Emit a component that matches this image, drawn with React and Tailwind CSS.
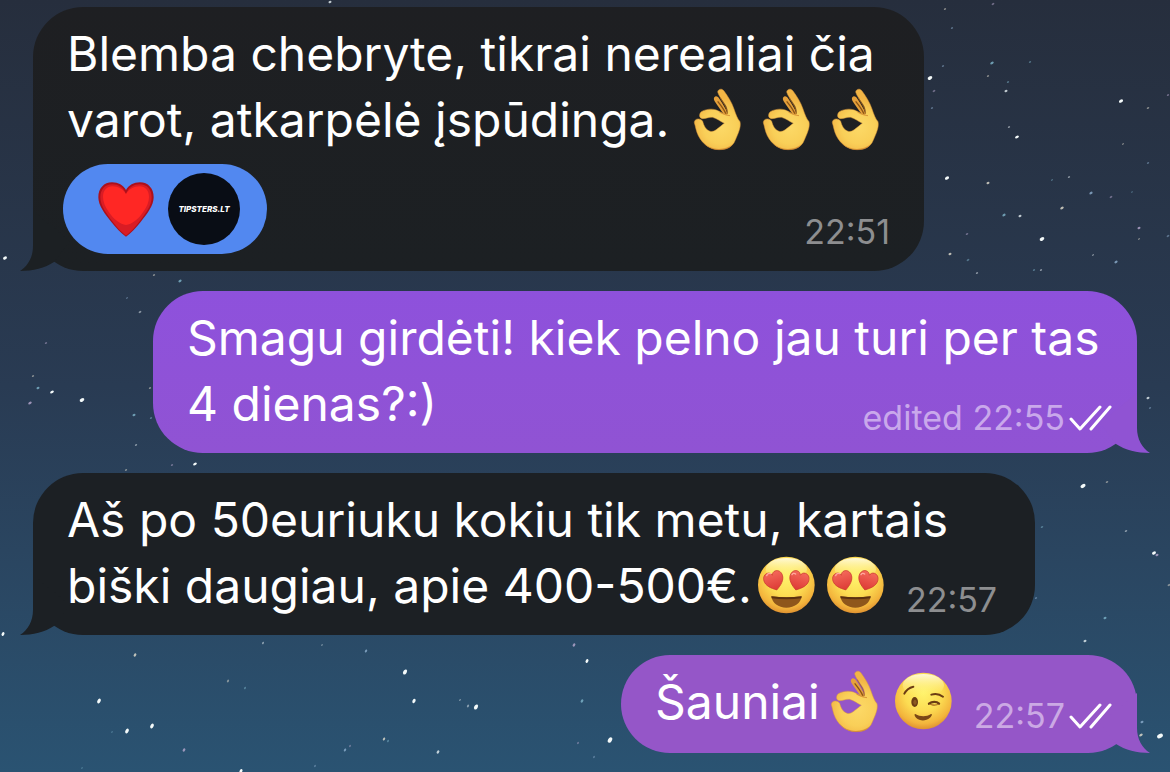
const STARS = [
  [330, 2, 1.3], [952, 28, 1], [993, 4, 1.2], [945, 9, 1], [992, 63, 1.5], [930, 78, 2], [943, 66, 1], [934, 91, 1.2],
  [988, 76, 1], [1008, 82, 1], [1006, 91, 1.3], [932, 108, 1], [1121, 101, 1.8], [1148, 108, 1.1], [1030, 62, 1],
  [1009, 127, 1], [1017, 137, 1.6], [947, 178, 1.8], [988, 183, 1.3], [1052, 180, 0.9], [1069, 177, 1], [1091, 193, 1.4],
  [1111, 197, 1.2], [1062, 208, 1.5], [1004, 215, 1.4], [1020, 216, 1.3], [1042, 239, 2], [967, 234, 1.1], [950, 254, 1.3],
  [968, 260, 1.2], [977, 273, 1], [1116, 262, 1.4], [1139, 228, 1.3], [1139, 239, 0.9], [1034, 270, 1], [1041, 270, 1],
  [1148, 163, 1], [1168, 95, 1], [1123, 144, 0.9], [1132, 192, 0.8], [1093, 255, 0.9], [1168, 236, 1.2],
  [5, 258, 1.7], [154, 275, 1], [180, 281, 1.4], [140, 312, 1.2], [127, 298, 0.9], [46, 343, 1], [33, 376, 1],
  [38, 388, 1.3], [52, 392, 1.6], [82, 400, 2], [30, 403, 1.5], [150, 388, 1], [134, 415, 1.3], [136, 445, 1],
  [195, 464, 1.6], [172, 465, 1], [126, 470, 1], [151, 418, 1],
  [1148, 398, 1.3], [1150, 408, 1], [1083, 486, 2.2], [1107, 482, 1.1], [1042, 527, 1.1], [1126, 531, 1.1],
  [1154, 553, 1.7], [1157, 555, 1.3], [1169, 585, 1.2], [1105, 618, 1.3], [1085, 641, 1.3], [1036, 598, 1],
  [3, 634, 1.6], [135, 655, 1.5], [99, 701, 2], [127, 731, 2], [152, 726, 2], [184, 750, 1.5], [228, 681, 1.2],
  [245, 688, 1.1], [263, 643, 1.1], [366, 651, 1.3], [405, 672, 2.2], [414, 701, 1.8], [476, 707, 2.2], [468, 706, 1.2],
  [345, 750, 1.3], [350, 746, 1], [384, 739, 1.3], [388, 741, 1.1], [438, 752, 1.5], [315, 766, 1], [574, 645, 1.5],
  [587, 661, 1.6], [582, 701, 1.5], [610, 740, 2.4], [594, 757, 1], [578, 743, 1], [241, 771, 1.6], [112, 732, 0.8],
  [460, 700, 0.9], [1142, 722, 1.3], [1160, 736, 2.5], [1141, 735, 1.5], [82, 768, 0.8], [322, 645, 0.8],
];

const COLORS = ["#e9f2f5", "#8fb0cf", "#b9a9cf", "#e5e0cf", "#7fb6cc"];

function NightSky() {
  return (
    <svg
      aria-hidden="true"
      className="absolute inset-0 -z-10 h-full w-full"
      viewBox="0 0 1170 772"
      preserveAspectRatio="xMidYMid slice"
    >
      {STARS.map(([x, y, r], i) => (
        <ellipse
          key={i}
          cx={x}
          cy={y}
          rx={r * 1.25}
          ry={r * 0.8}
          transform={`rotate(${y > 620 && x < 1000 ? -60 : -30} ${x} ${y})`}
          fill={r >= 1.6 ? "#f4fafa" : COLORS[i % 5]}
          opacity={r >= 1.6 ? 1 : r >= 1.3 ? 0.8 : 0.5}
        />
      ))}
    </svg>
  );
}

function EmojiDefs() {
  return (
    <svg aria-hidden="true" className="absolute h-0 w-0">
      <defs>
        <radialGradient id="face" cx="0.5" cy="0.36" r="0.66">
          <stop offset="0" stopColor="#fff36c" />
          <stop offset="0.5" stopColor="#fcdc52" />
          <stop offset="0.82" stopColor="#f3b43c" />
          <stop offset="1" stopColor="#db8a2e" />
        </radialGradient>
        <linearGradient id="shine" x1="0" y1="0" x2="0" y2="1">
          <stop offset="0" stopColor="#fffbe0" stopOpacity="0.95" />
          <stop offset="1" stopColor="#fff36c" stopOpacity="0" />
        </linearGradient>
        <radialGradient id="skin" gradientUnits="userSpaceOnUse" cx="122" cy="170" r="86">
          <stop offset="0" stopColor="#fcd967" />
          <stop offset="0.6" stopColor="#f9cf58" />
          <stop offset="1" stopColor="#f2b545" />
        </radialGradient>
        <linearGradient id="heartEye" x1="0" y1="0" x2="0" y2="1">
          <stop offset="0" stopColor="#f4685a" />
          <stop offset="1" stopColor="#dc3a35" />
        </linearGradient>
      </defs>
    </svg>
  );
}

const EMOJI = "inline-block h-[66px] w-[69px] shrink-0 align-top";

function OkHand() {
  return (
    <svg role="img" aria-label="OK hand" className={EMOJI} viewBox="9 51 207 198">
      <path
        d="M103 82C107 76 115 80 119 88C127 101 138 115 143 134L134 136C123 122 112 106 104 94C101 89 101 85 103 82Z"
        fill="#e5a03a"
      />
      <path d="M113 94C123 106 132 118 138 132" fill="none" stroke="#8b5415" strokeWidth="4" />
      <path
        d="M113 66C114 57 126 54 132 63C143 78 156 98 162 117C168 134 172 146 180 155C184 171 174 191 166 210C158 231 140 239 117 239C89 239 68 222 55 197C48 183 47 170 43 158C42 146 61 142 68 154C71 166 77 180 90 184C104 188 117 171 133 160C121 154 111 146 98 142C87 140 77 147 67 146C56 144 57 131 64 125C76 118 94 115 109 120C120 125 131 132 141 134C145 128 142 112 135 103C128 91 116 78 113 66Z"
        fill="url(#skin)"
        stroke="#dc993b"
        strokeWidth="1.5"
      />
      <path d="M121 83C128 99 140 107 142 131" fill="none" stroke="#a3651c" strokeWidth="2.5" />
      <path d="M118 126C128 132 138 136 150 137" fill="none" stroke="#d18c31" strokeWidth="2.5" />
      <path
        d="M70 217C88 240 132 244 158 223C147 240 130 240 117 240C96 240 80 231 70 217Z"
        fill="#cf812c"
        opacity="0.6"
      />
    </svg>
  );
}

function FaceBase() {
  return (
    <>
      <circle cx="103" cy="99" r="85" fill="url(#face)" />
      <ellipse cx="103" cy="52" rx="62" ry="34" fill="url(#shine)" />
    </>
  );
}

function HeartEyes() {
  const heart =
    "M0 29C-16 19 -29 7 -29 -8C-29 -20 -21 -27 -13 -27C-6 -27 -2 -23 0 -17C2 -23 6 -27 13 -27C21 -27 29 -20 29 -8C29 7 16 19 0 29Z";
  return (
    <svg role="img" aria-label="Smiling face with heart eyes" className={EMOJI} viewBox="0 3 207 198">
      <FaceBase />
      <path d={heart} transform="translate(66 86) rotate(-17)" fill="url(#heartEye)" stroke="#c9362d" strokeWidth="2" />
      <path d={heart} transform="translate(140 86) rotate(17)" fill="url(#heartEye)" stroke="#c9362d" strokeWidth="2" />
      <path d="M44 71C46 65 51 63 56 65" stroke="#ffaaa0" strokeWidth="4" strokeLinecap="round" fill="none" />
      <path d="M120 68C122 64 127 63 131 66" stroke="#ffaaa0" strokeWidth="4" strokeLinecap="round" fill="none" />
      <path d="M58 133C88 137 119 137 149 133C146 154 128 167 103 167C79 167 61 154 58 133Z" fill="#8e561b" />
      <path d="M58 133C88 137 119 137 149 133L148 139C119 143 88 143 59 139Z" fill="#5b3110" />
    </svg>
  );
}

function WinkFace() {
  return (
    <svg role="img" aria-label="Winking face" className={EMOJI} viewBox="0 3 207 198">
      <FaceBase />
      <g fill="none" stroke="#6c3d14" strokeLinecap="round">
        <path d="M46 77C51 67 61 59 73 56" strokeWidth="6" />
        <path d="M127 80C139 76 153 79 162 86" strokeWidth="6" />
        <path d="M120 107C129 100 143 100 150 107" strokeWidth="7" />
      </g>
      <path d="M121 107C130 110 142 110 150 108C145 115 127 115 121 107Z" fill="#a9691f" />
      <ellipse cx="77" cy="102" rx="10" ry="15" fill="#6c3d14" />
      <ellipse cx="78" cy="103" rx="5" ry="8" fill="#8c5a22" />
      <path d="M79 138C94 147 112 147 126 138C131 137 128 145 123 149C110 160 93 160 81 149C76 143 75 138 79 138Z" fill="#7a4716" />
    </svg>
  );
}

function Heart() {
  return (
    <svg aria-hidden="true" className="h-14 w-14" viewBox="294 124 168 168">
      <path
        d="M378 291C363 281 348 265 334 247C314 222 295 198 295 173C295 146 312 128 336 128C355 128 370 137 378 151C386 137 401 128 420 128C444 128 461 146 461 173C461 198 442 222 422 247C408 265 393 281 378 291Z"
        fill="#ad101b"
      />
      <path
        d="M378 288C365 279 350 262 337 245C318 220 301 197 301 173C301 150 315 134 337 134C356 134 371 144 378 163C385 144 400 134 419 134C441 134 455 150 455 173C455 197 438 220 419 245C406 262 391 279 378 288Z"
        fill="#d91c24"
      />
      <path
        d="M378 256C361 255 341 239 327 218C315 202 309 186 309 172C309 153 320 140 337 140C355 140 371 149 378 164C385 149 401 140 419 140C436 140 447 153 447 172C447 186 441 202 429 218C415 239 395 255 378 256Z"
        fill="#ff2724"
      />
    </svg>
  );
}

function ReadTicks() {
  return (
    <svg
      role="img"
      aria-label="Read"
      className="h-7 w-[43px] shrink-0"
      viewBox="0 0 43 28"
      fill="none"
      stroke="#ffffff"
      strokeWidth="3"
      strokeLinecap="round"
      strokeLinejoin="round"
    >
      <path d="M2 15L11 25L31 3M22 25L41 3" />
    </svg>
  );
}

function Tail({ side }) {
  const own = side === "right";
  return (
    <svg
      aria-hidden="true"
      viewBox="0 0 50 60"
      className={
        own
          ? "absolute -right-[13px] bottom-0 h-[60px] w-[50px] -scale-x-100"
          : "absolute -left-[13px] bottom-0 h-[60px] w-[50px]"
      }
    >
      <path d="M13 0V35C13 46 8 55 0 60C13 60 25 57 34 51L50 30Z" fill="currentColor" />
    </svg>
  );
}

function Bubble({ side, className, children }) {
  return (
    <li
      className={`relative flex w-full flex-col rounded-[50px] pt-[14px] pl-[34px] ${
        side === "right" ? "self-end pr-[25px]" : "self-start pr-[34px]"
      } ${className}`}
    >
      <Tail side={side} />
      {children}
    </li>
  );
}

function Meta({ muted, read, children }) {
  return (
    <div className="relative flex shrink-0 items-center gap-1 text-[34px] leading-[38px]">
      <span className={muted}>{children}</span>
      {read && <ReadTicks />}
    </div>
  );
}

const LAST_ROW = "relative flex items-end gap-4";
const GRAY = "text-[#8d8e90]";

export default function App() {
  return (
    <main className="relative isolate min-h-screen overflow-hidden bg-linear-to-b from-[#262e3d] via-[#293b53] to-[#2a5372] px-[33px] pt-[7px] pb-[19px] font-['Inter','Liberation_Sans',sans-serif] text-5xl leading-[66px] text-white">
      <NightSky />
      <EmojiDefs />
      <ol className="flex flex-col gap-5">
        <Bubble side="left" className="max-w-[891px] bg-linear-to-b from-[#1e1f22] to-[#1c2023] pb-[17px] text-[#1c2023]">
          <p className="relative whitespace-nowrap text-white">
            Blemba chebryte, tikrai nerealiai čia
            <br />
            <span className="flex justify-between">
              <span>varot, atkarpėlė įspūdinga.</span>
              <span className="flex">
                <OkHand />
                <OkHand />
                <OkHand />
              </span>
            </span>
          </p>
          <div className="relative flex items-end justify-between pt-[11px]">
            <button
              type="button"
              aria-label="Heart reaction from TIPSTERS.LT"
              className="-ml-1 flex h-[90px] items-center gap-[14px] rounded-full bg-[#5288f0] pr-[27px] pl-[35px]"
            >
              <Heart />
              <span className="flex h-[72px] w-[72px] items-center justify-center rounded-full bg-[#090d15] text-[8px] leading-none font-extrabold text-white italic">
                TIPSTERS.LT
              </span>
            </button>
            <div className="pb-[3px]">
              <Meta muted={GRAY}>
                <time>22:51</time>
              </Meta>
            </div>
          </div>
        </Bubble>

        <Bubble side="right" className="max-w-[984px] bg-linear-to-b from-[#8e51dc] to-[#9053d3] pb-4 text-[#9053d3]">
          <p className="relative whitespace-nowrap text-white">Smagu girdėti! kiek pelno jau turi per tas</p>
          <div className={`${LAST_ROW} justify-between`}>
            <p className="text-white">4 dienas?:)</p>
            <Meta read muted="text-[#c9a8eb]">
              edited <time>22:55</time>
            </Meta>
          </div>
        </Bubble>

        <Bubble side="left" className="max-w-[1002px] bg-[#1c2024] pb-4 text-[#1c2024]">
          <p className="relative whitespace-nowrap text-white">Aš po 50euriuku kokiu tik metu, kartais</p>
          <div className={LAST_ROW}>
            <p className="flex whitespace-nowrap text-white">
              biški daugiau, apie 400-500€.
              <HeartEyes />
              <HeartEyes />
            </p>
            <Meta muted={GRAY}>
              <time>22:57</time>
            </Meta>
          </div>
        </Bubble>

        <Bubble side="right" className="max-w-[516px] bg-[#9556c8] pb-[18px] text-[#9556c8]">
          <div className={`${LAST_ROW} justify-between`}>
            <p className="flex whitespace-nowrap text-white">
              Šauniai
              <OkHand />
              <WinkFace />
            </p>
            <Meta read muted="text-[#cba9e4]">
              <time>22:57</time>
            </Meta>
          </div>
        </Bubble>
      </ol>
    </main>
  );
}
